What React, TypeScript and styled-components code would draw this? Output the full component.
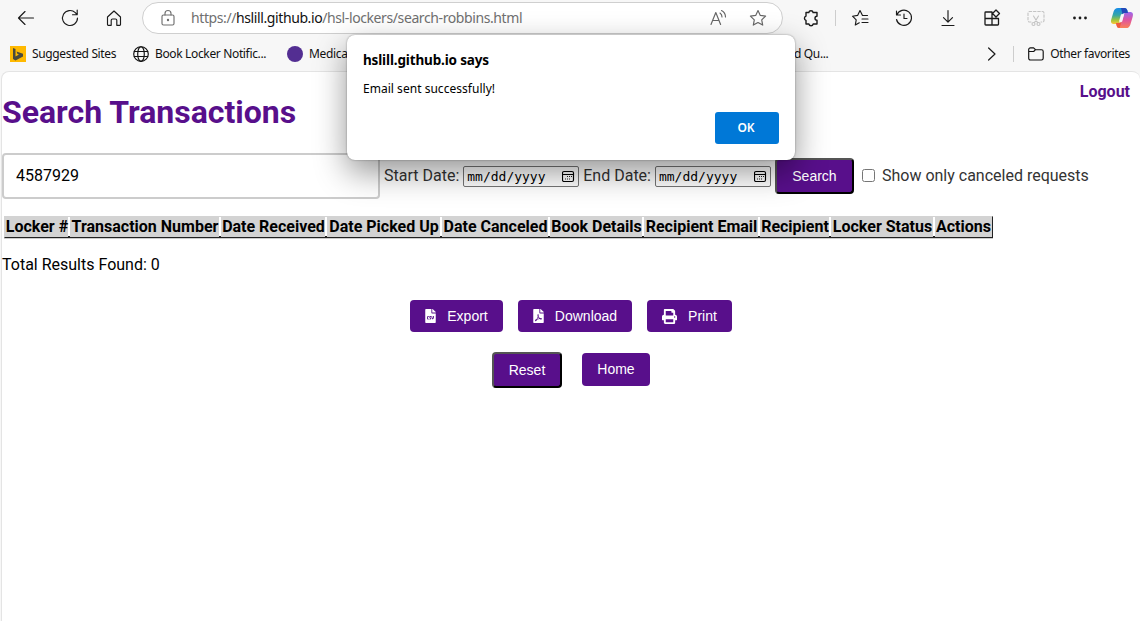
import React from 'react';
import styled, { createGlobalStyle, css } from 'styled-components';
import { FaFileCsv, FaFilePdf, FaPrint } from 'react-icons/fa';

const Global = createGlobalStyle`
  * { box-sizing: border-box; }
  html, body { margin: 0; padding: 0; }
  body { background: #f7f7f7; overflow: hidden; }
`;
const purple = '#580f8b';
const ui = "'Noto Sans', 'Open Sans', sans-serif";

const Window = styled.div`
  position: relative;
  width: 1140px;
  height: 621px;
  display: flex;
  flex-direction: column;
  overflow: hidden;
  background: #f7f7f7;
  font-family: Roboto, sans-serif;
`;
const Toolbar = styled.header`
  display: flex;
  align-items: center;
  height: 36px;
  flex: none;
  padding-left: 4px;
`;
const IconButton = styled.button<{ $tone?: string; $w?: number }>`
  display: flex;
  align-items: center;
  justify-content: center;
  flex: none;
  width: ${p => p.$w ?? 44}px;
  height: 32px;
  padding: 0;
  border: 0;
  background: none;
  color: ${p => p.$tone ?? '#1b1b1b'};
`;
const Glyph = styled.svg`
  display: block;
  flex: none;
  fill: none;
  stroke: currentColor;
  stroke-width: 1.15;
  stroke-linecap: round;
  stroke-linejoin: round;
`;
const Address = styled.div`
  display: flex;
  align-items: center;
  width: 641px;
  height: 32px;
  flex: none;
  margin: 0 6px;
  padding: 0 4px 0 15px;
  border: 1px solid #cfcfcf;
  border-radius: 16px;
  background: #fff;
  color: #707070;
`;
const Url = styled.span`
  flex: 1;
  margin-left: 13px;
  font: 14px ${ui};
  letter-spacing: -0.4px;
  white-space: nowrap;
  position: relative;
  top: -1px;
  b { font-weight: 400; color: #111; }
`;
const Divider = styled.span<{ $mr?: number }>`
  width: 1px;
  height: 16px;
  flex: none;
  margin-right: ${p => p.$mr ?? 0}px;
  background: #cdcdcd;
`;
const Favorites = styled.nav`
  display: flex;
  align-items: center;
  height: 35px;
  flex: none;
  padding: 0 10px;
  color: #111;
`;
const Favorite = styled.span<{ $w?: number }>`
  display: flex;
  align-items: center;
  gap: 6px;
  flex: none;
  width: ${p => (p.$w ? `${p.$w}px` : 'auto')};
  font: 12px ${ui};
  letter-spacing: -0.35px;
  white-space: nowrap;
`;
const Dot = styled.i`
  width: 16px;
  height: 16px;
  border-radius: 50%;
  background: #532e92;
`;
const Spacer = styled.span`
  flex: 1;
`;
const Page = styled.main`
  flex: 1;
  margin-left: 1px;
  border: 1px solid #e4e4e4;
  border-right: 0;
  border-bottom: 0;
  border-radius: 8px 8px 0 0;
  background: #fff;
`;
const PageHead = styled.div`
  display: flex;
  justify-content: space-between;
  height: 81px;
  padding-right: 10px;
`;
const Title = styled.h1`
  margin: 21px 0 0;
  font: 700 32px/38px Roboto, sans-serif;
  color: ${purple};
`;
const Logout = styled.a`
  margin-top: 10px;
  font: 700 16px/19px Roboto, sans-serif;
  color: ${purple};
`;
const SearchForm = styled.form`
  display: flex;
  align-items: center;
  height: 46px;
  color: #333;
  font-size: 16px;
  white-space: nowrap;
`;
const FieldLabel = styled.label`
  display: flex;
  align-items: center;
  margin-bottom: 2px;
`;
const SearchInput = styled.input`
  width: 378px;
  height: 46px;
  flex: none;
  margin-right: 4px;
  padding: 0 12px 2px;
  border: 2px solid #ccc;
  border-radius: 4px;
  font: 16px Roboto, sans-serif;
  color: #000;
  outline: 0;
`;
const DateField = styled.span`
  display: flex;
  align-items: center;
  justify-content: space-between;
  width: 116px;
  height: 21px;
  flex: none;
  margin: 3px 4px 0 4px;
  padding: 0 3px 0 3px;
  border: 1px solid #767676;
  border-radius: 2px;
  background: #fff;
  color: #000;
  font: 13px/19px 'DejaVu Sans Mono', monospace;
  letter-spacing: 0;
`;
const raised = css`
  height: 36px;
  border: 2px outset #000;
  border-color: #555 #000 #000 #555;
`;
const PurpleButton = styled.button<{ $w: number; $raised?: boolean; $h?: number }>`
  display: flex;
  align-items: center;
  justify-content: center;
  flex: none;
  gap: 11px;
  width: ${p => p.$w}px;
  height: ${p => p.$h ?? 32}px;
  padding: 0;
  border: 0;
  border-radius: 4px;
  background: ${purple};
  color: #fff;
  font: 14px 'Liberation Sans', Arial, sans-serif;
  ${p => p.$raised && raised}
`;
const CsvIcon = styled(FaFileCsv)`
  width: 11px;
  height: 14px;
`;
const PdfIcon = styled(FaFilePdf)`
  width: 11px;
  height: 14px;
`;
const Check = styled.input`
  width: 13px;
  height: 13px;
  flex: none;
  margin: 0 7px 0 8px;
`;
const Table = styled.table`
  margin: 17px 0 0 2px;
  border: 1px solid #222;
  border-top-color: #d3d3d3;
  border-left-color: #d3d3d3;
  box-shadow: 0 1px 0 #ccc;
  border-spacing: 0;
  table-layout: fixed;
  width: 989px;
`;
const Th = styled.th<{ $w: number }>`
  width: ${p => p.$w}px;
  height: 20px;
  padding: 0 1px 0 0;
  background:
    linear-gradient(#222, #222) right bottom / 2px 1px no-repeat,
    linear-gradient(#fff, #fff) right top / 2px 100% no-repeat,
    #d3d3d3;
  font: 700 16px/20px Roboto, sans-serif;
  white-space: nowrap;
  &:last-child { padding: 0; background: #d3d3d3; }
`;
const Total = styled.p`
  margin: 17px 0 0;
  font-size: 16px;
  line-height: 19px;
`;
const ButtonRow = styled.div<{ $gap: number; $top: number }>`
  display: flex;
  justify-content: center;
  align-items: center;
  gap: ${p => p.$gap}px;
  margin-top: ${p => p.$top}px;
`;
const HomeButton = styled(PurpleButton)`
  margin-bottom: 2px;
`;
const Dialog = styled.section`
  position: absolute;
  left: 347px;
  top: 35px;
  width: 448px;
  height: 125px;
  display: flex;
  flex-direction: column;
  padding: 16px;
  border-radius: 8px;
  background: #fff;
  box-shadow: 0 0 2px rgba(0,0,0,.4), 0 12px 32px rgba(0,0,0,.42);
  font: 12px ${ui};
  color: #000;
`;
const DialogTitle = styled.h2`
  margin: 0;
  font: 700 13.5px/19px ${ui};
  letter-spacing: -0.15px;
`;
const DialogText = styled.p`
  margin: 10px 0 0;
  line-height: 18px;
  letter-spacing: 0.03px;
`;
const Ok = styled.button`
  align-self: flex-end;
  margin-top: auto;
  width: 64px;
  height: 32px;
  padding: 0 2px 2px 0;
  border: 0;
  border-radius: 3px;
  background: #0078d7;
  color: #fff;
  font: 600 12px ${ui};
`;

const Icon = ({ children, size = 20 }: { children: React.ReactNode; size?: number }) => (
  <Glyph width={size} height={size} viewBox="0 0 20 20">{children}</Glyph>
);
const Calendar = () => (
  <Glyph width="13" height="13" viewBox="0 0 13 13" strokeWidth="1">
    <rect x=".5" y="1.5" width="11" height="10" rx="1.5" />
    <path d="M.5 4.500h11" />
    <g fill="#222" stroke="none">
      <path d="M5 6h1v1H5zM7 6h1v1H7zM9 6h1v1H9zM3 8.500h1v1H3zM5 8.500h1v1H5zM7 8.500h1v1H7z" />
    </g>
  </Glyph>
);
const Copilot = () => (
  <svg width="24" height="24" viewBox="0 0 24 24">
    <defs>
      <linearGradient id="cl" x1="0" y1="0" x2="0" y2="1">
        <stop offset="0" stopColor="#168bea" /><stop offset=".45" stopColor="#35a6a5" />
        <stop offset=".75" stopColor="#9fc53b" /><stop offset="1" stopColor="#ffc63a" />
      </linearGradient>
      <linearGradient id="cr" x1="0" y1="0" x2="0" y2="1">
        <stop offset="0" stopColor="#9a68ee" /><stop offset=".5" stopColor="#df559f" /><stop offset="1" stopColor="#fb8158" />
      </linearGradient>
    </defs>
    <path d="M8 2h6.600c1.600 0 2.300 1 2.700 2.300L18 7h-3c-2 0-2.700 1-3.200 2.800l-1.400 5c-.6 2-1.500 3.200-3.400 3.200H4c-3 0-3.500-2.200-2.600-5L3.600 5.600C4.400 3.200 5.600 2 8 2z" fill="url(#cl)" />
    <path d="M16 22H9.400c-1.600 0-2.300-1-2.700-2.300L6 17h3c2 0 2.700-1 3.200-2.800l1.400-5C14.200 7.200 15.100 6 17 6h3c3 0 3.500 2.200 2.600 5l-2.200 7.400C19.600 20.800 18.400 22 16 22z" fill="url(#cr)" />
    <path d="M11 2h3.600c1.600 0 2.300 1 2.700 2.300L18 7h-3c-1.200 0-2 .4-2.500 1.200z" fill="#2448b8" />
    <path d="M6 17h3c1.300 0 2-.5 2.500-1.400L9.600 22c-1.800 0-2.500-1-2.900-2.300z" fill="#ef5b3c" />
    <path d="M11 8.300h3.200l-2.100 7.400H8.900z" fill="#f7f7f7" />
  </svg>
);

const columns: [string, number][] = [
  ['Locker #', 65], ['Transaction Number', 151], ['Date Received', 106], ['Date Picked Up', 115],
  ['Date Canceled', 108], ['Book Details', 94], ['Recipient Email', 116], ['Recipient', 71],
  ['Locker Status', 104], ['Actions', 57],
];

export default function App() {
  return (
    <Window>
      <Global />
      <Toolbar>
        <IconButton><Icon><path d="M17.500 10H2.500M9 3.500 2.500 10 9 16.500" /></Icon></IconButton>
        <IconButton><Icon><path d="M17.500 10a7.500 7.500 0 1 1-2.200-5.300L17 6.500M17.200 2v4.700h-4.700" /></Icon></IconButton>
        <IconButton><Icon><path d="M3.500 9 10 3l6.500 6v7.500a.8.8 0 0 1-.8.8h-2.900v-5a1.300 1.300 0 0 0-1.300-1.300h-3a1.300 1.300 0 0 0-1.300 1.300v5H4.300a.8.8 0 0 1-.8-.8z" /></Icon></IconButton>
        <Address>
          <Icon><rect x="4" y="7" width="12" height="10" rx="1.500" /><path d="M7 7V5.500a3 3 0 0 1 6 0V7" /><circle cx="10" cy="12" r=".6" fill="currentColor" /></Icon>
          <Url>https://<b>hslill.github.io</b>/hsl-lockers/search-robbins.html</Url>
          <IconButton $w={40} $tone="#666"><Icon><path d="M3 16.500 7.800 4.500l4.800 12M4.700 12.500h6.300M12 5a5 5 0 0 1 2 4M13.500 2.500A7.500 7.500 0 0 1 17.500 9" /></Icon></IconButton>
          <IconButton $w={40} $tone="#666"><Icon><path d="m10 2.500 2.300 4.900 5.300.7-3.900 3.700 1 5.300-4.700-2.600-4.700 2.600 1-5.300-3.900-3.700 5.300-.7z" /></Icon></IconButton>
        </Address>
        <IconButton><Icon><path d="M5 4.500h2.800a2.200 2.200 0 0 1 4.300 0H16v3.800a2 2 0 0 0 0 4V16h-3.800a2.200 2.200 0 0 1-4.300 0H5v-3.700a2.200 2.200 0 0 1 0-4.200z" strokeWidth="1.400" /></Icon></IconButton>
        <IconButton as={ToolbarGap} />
        <Divider />
        <IconButton $w={48}><Icon><path d="M17.500 7.500h-5L10 2.500 7.600 7.400l-5.100.8 3.700 3.600-.9 5.200 4-2.200M12 11h6M12 14.500h6" /></Icon></IconButton>
        <IconButton $w={40}><Icon><path d="M2.500 3v4h4M2.800 7A7.600 7.600 0 1 1 2.500 11.500M10 6v4.500h3" /></Icon></IconButton>
        <IconButton $w={48}><Icon><path d="M10 2.500v11.500M5.500 9.700 10 14.200l4.500-4.500M4 17.500h12" /></Icon></IconButton>
        <IconButton $w={40}><Icon><path d="M10 4H3.800a.8.800 0 0 0-.8.800V16.200a.8.800 0 0 0 .8.800H15.700a.8.800 0 0 0 .8-.8V10.500H3M10 4v13M14 2l3.500 3.500L14 9l-3.500-3.500z" strokeWidth="1.300" /></Icon></IconButton>
        <IconButton $w={48} $tone="#c4c4c4"><Icon><path d="M5 14H3.500A1.500 1.500 0 0 1 2 12.500V5a1.500 1.500 0 0 1 1.500-1.500h13A1.500 1.500 0 0 1 18 5v7.500a1.500 1.500 0 0 1-1.500 1.500H15" strokeDasharray="2.500 1.800" /><path d="m7.500 8 4 6.500M12.500 8l-4 6.500" /><circle cx="7.500" cy="16" r="1.500" /><circle cx="12.500" cy="16" r="1.500" /></Icon></IconButton>
        <IconButton $w={40}><Icon><g fill="currentColor" stroke="none"><circle cx="4.500" cy="10" r="1.400" /><circle cx="10" cy="10" r="1.400" /><circle cx="15.500" cy="10" r="1.400" /></g></Icon></IconButton>
        <IconButton $w={44}><Copilot /></IconButton>
      </Toolbar>
      <Favorites>
        <Favorite $w={123}>
          <svg width="16" height="16" viewBox="0 0 16 16"><path fill="#ffb900" d="M0 0h16v16H0z" /><path fill="#4a4a3d" d="m3 2 2.500 1v7.500L9 8.600 7.500 7.900 6.500 5.500 13 7.800v2.700L5.500 14.500 3 13z" /></svg>
          Suggested Sites
        </Favorite>
        <Favorite $w={154}>
          <Glyph width="16" height="16" viewBox="0 0 16 16"><circle cx="8" cy="8" r="7.300" /><ellipse cx="8" cy="8" rx="3.300" ry="7.300" /><path d="M1.300 5.500h13.400M1.300 10.500h13.400" /></Glyph>
          Book Locker Notific...
        </Favorite>
        <Favorite $w={507}><Dot />Medical</Favorite>
        <Favorite>d Qu...</Favorite>
        <Spacer />
        <IconButton $w={44}><Icon size={16}><path d="m7 2.500 8 7.500-8 7.500" strokeWidth="1.500" /></Icon></IconButton>
        <Divider $mr={14} />
        <Favorite>
          <Glyph width="16" height="16" viewBox="0 0 16 16"><path d="M.7 3.500A1.700 1.700 0 0 1 2.400 1.800h3.200L7.500 3.700h6a1.700 1.700 0 0 1 1.700 1.700v6.900a1.700 1.700 0 0 1-1.700 1.700h-11A1.700 1.700 0 0 1 .7 12.300zM.7 5.500h5L7.500 3.700" /></Glyph>
          Other favorites
        </Favorite>
      </Favorites>
      <Page>
        <PageHead><Title>Search Transactions</Title><Logout>Logout</Logout></PageHead>
        <SearchForm>
          <SearchInput defaultValue="4587929" />
          <FieldLabel>Start Date:<DateField>mm/dd/yyyy<Calendar /></DateField></FieldLabel>
          <FieldLabel>End Date:<DateField>mm/dd/yyyy<Calendar /></DateField></FieldLabel>
          <PurpleButton type="button" $w={79} $raised>Search</PurpleButton>
          <FieldLabel><Check type="checkbox" />Show only canceled requests</FieldLabel>
        </SearchForm>
        <Table><thead><tr>{columns.map(([label, w]) => <Th key={label} $w={w}>{label}</Th>)}</tr></thead></Table>
        <Total>Total Results Found: 0</Total>
        <ButtonRow $gap={15} $top={26}>
          <PurpleButton $w={93}><CsvIcon />Export</PurpleButton>
          <PurpleButton $w={114}><PdfIcon />Download</PurpleButton>
          <PurpleButton $w={85}><FaPrint size={15} />Print</PurpleButton>
        </ButtonRow>
        <ButtonRow $gap={20} $top={20}>
          <PurpleButton $w={70} $raised>Reset</PurpleButton>
          <HomeButton $w={68} $h={33}>Home</HomeButton>
        </ButtonRow>
      </Page>
      <Dialog role="dialog">
        <DialogTitle>hslill.github.io says</DialogTitle>
        <DialogText>Email sent successfully!</DialogText>
        <Ok>OK</Ok>
      </Dialog>
    </Window>
  );
}

const ToolbarGap = styled.span`
  && { width: 2px; }
`;
